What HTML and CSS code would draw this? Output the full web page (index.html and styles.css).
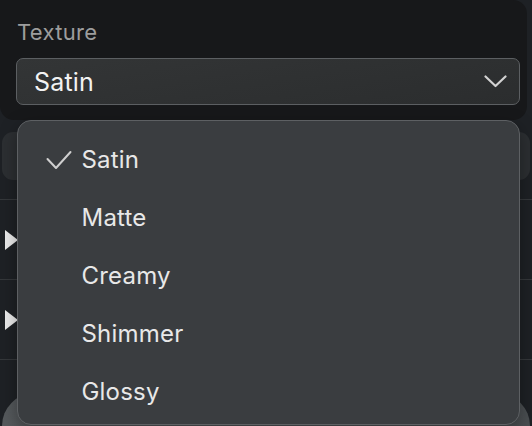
FILE: index.html
```html
<!DOCTYPE html>
<html>
<head>
<meta charset="utf-8">
<link rel="stylesheet" href="styles.css">
</head>
<body>
<div class="panel">
  <div class="label">Texture</div>
  <div class="select">
    <span class="select-value">Satin</span>
    <svg class="chevron" width="23" height="13" viewBox="0 0 23 13"><path d="M1.5 1.5 L11.5 11 L21.5 1.5" fill="none" stroke="#d2d2d2" stroke-width="2.2" stroke-linecap="round" stroke-linejoin="round"/></svg>
  </div>
</div>
<div class="content">
  <div class="card"></div>
  <div class="row"><span class="tri"></span></div>
  <div class="row"><span class="tri"></span></div>
  <div class="row last"><div class="button"></div></div>
</div>
<div class="menu">
  <div class="item">
    <svg class="check" width="26" height="20" viewBox="0 0 26 20"><path d="M1.5 9 L10 18 L24.5 2" fill="none" stroke="#cfcfcf" stroke-width="2" stroke-linecap="round" stroke-linejoin="round"/></svg>
    <span>Satin</span>
  </div>
  <div class="item"><span>Matte</span></div>
  <div class="item"><span>Creamy</span></div>
  <div class="item"><span>Shimmer</span></div>
  <div class="item"><span>Glossy</span></div>
</div>
</body>
</html>
```
FILE: styles.css
```css
html, body {
  margin: 0;
  padding: 0;
}
body {
  width: 532px;
  height: 426px;
  overflow: hidden;
  background: #1e2125;
  font-family: Inter, "Noto Sans", sans-serif;
  position: relative;
}
.panel {
  width: 527px;
  height: 120px;
  box-sizing: border-box;
  background: #17181a;
  border-radius: 0 14px 14px 14px;
  padding: 18px 0 0 16px;
}
.label {
  color: #9d9d9d;
  font-size: 22px;
  line-height: 28px;
  padding-left: 1px;
  letter-spacing: 0.3px;
}
.select {
  margin-top: 12px;
  width: 504px;
  height: 47px;
  box-sizing: border-box;
  border: 1.5px solid #5c5f62;
  border-radius: 7px;
  background: linear-gradient(170deg, #333536, #2b2d2e);
  display: flex;
  align-items: center;
  justify-content: space-between;
  padding: 0 12px 0 17px;
}
.select-value {
  color: #f2f2f2;
  font-size: 25px;
  line-height: 30px;
  letter-spacing: 0.2px;
}
.chevron {
  display: block;
}
.content {
  display: flex;
  flex-direction: column;
}
.card {
  margin: 12px 2px 0 2px;
  height: 48px;
  border-radius: 11px;
  background: #2c2f32;
}
.row {
  margin-top: 19px;
  height: 79px;
  border-top: 1px solid #35383b;
  display: flex;
  align-items: center;
  padding-left: 5px;
}
.row + .row {
  margin-top: 0;
}
.tri {
  width: 0;
  height: 0;
  border-top: 10.5px solid transparent;
  border-bottom: 10.5px solid transparent;
  border-left: 13px solid #ececec;
}
.row.last {
  height: 66px;
  align-items: flex-start;
  padding-left: 2px;
}
.button {
  margin-top: 33px;
  width: 528px;
  height: 33px;
  border-radius: 34px 34px 0 0;
  background: linear-gradient(90deg, #55595c, #4a4e51);
}
.menu {
  position: absolute;
  left: 17px;
  top: 120px;
  width: 503px;
  height: 305px;
  box-sizing: border-box;
  background: #3a3d40;
  border: 1.5px solid #5d6063;
  border-radius: 14px;
  padding-top: 9.5px;
  box-shadow: 0 6px 18px rgba(0,0,0,0.35);
}
.item {
  height: 58px;
  display: flex;
  align-items: center;
  padding-left: 63.5px;
  position: relative;
  color: #e8e8e8;
  font-size: 24px;
  letter-spacing: 0.2px;
}
.check {
  position: absolute;
  left: 27.5px;
  top: 19px;
}
```
